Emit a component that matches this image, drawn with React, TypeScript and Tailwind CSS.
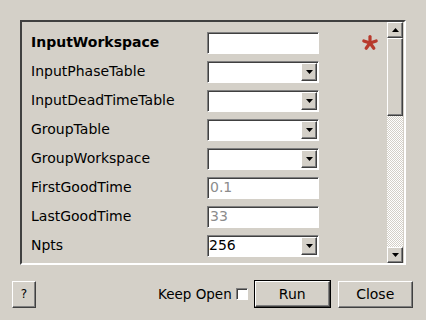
import React from "react";

const raised =
  "border border-t-white border-l-white border-r-[#404040] border-b-[#404040] shadow-[inset_-1px_-1px_#808080]";
const sunken =
  "border border-t-[#808080] border-l-[#808080] border-r-white border-b-white shadow-[inset_1px_1px_#404040]";

const ArrowDown = () => (
  <svg width="7" height="4" viewBox="0 0 7 4">
    <path d="M0 0h7L3.5 4z" fill="#000" />
  </svg>
);

const ArrowUp = () => (
  <svg width="7" height="4" viewBox="0 0 7 4">
    <path d="M0 4h7L3.5 0z" fill="#000" />
  </svg>
);

const TextBox = ({ value, muted }: { value?: string; muted?: boolean }) => (
  <div
    className={`${sunken} bg-white w-[112px] h-[22px] flex items-center pl-[2px] ${
      muted ? "text-[#8c8c8c]" : "text-black"
    }`}
  >
    {value}
  </div>
);

const Combo = ({ value }: { value?: string }) => (
  <div className={`${sunken} bg-white w-[112px] h-[22px] flex items-center pl-[1px] pr-[1px]`}>
    <span className="flex-1">{value}</span>
    <div className={`${raised} bg-[#d4d0c8] w-[16px] h-[18px] flex items-center justify-center`}>
      <ArrowDown />
    </div>
  </div>
);

const rows: { label: string; kind: "text" | "combo"; value?: string; muted?: boolean; bold?: boolean }[] = [
  { label: "InputWorkspace", kind: "text", bold: true },
  { label: "InputPhaseTable", kind: "combo" },
  { label: "InputDeadTimeTable", kind: "combo" },
  { label: "GroupTable", kind: "combo" },
  { label: "GroupWorkspace", kind: "combo" },
  { label: "FirstGoodTime", kind: "text", value: "0.1", muted: true },
  { label: "LastGoodTime", kind: "text", value: "33", muted: true },
  { label: "Npts", kind: "combo", value: "256" },
];

const Asterisk = () => (
  <svg width="18" height="18" viewBox="-9 -9 18 18">
    {[0, 72, 144, 216, 288].map((a) => (
      <line
        key={a}
        x1="0"
        y1="0"
        x2="0"
        y2="-6.5"
        stroke="#b83a2c"
        strokeWidth="3.2"
        strokeLinecap="round"
        transform={`rotate(${a})`}
      />
    ))}
  </svg>
);

export default function App() {
  return (
    <div
      className="w-[426px] h-[320px] bg-[#d4d0c8] text-[14px] text-black overflow-hidden"
      style={{ fontFamily: '"DejaVu Sans", sans-serif' }}
    >
      <div className="pt-[20px] pl-[20px]">
        <div className="w-[386px] h-[245px] border-2 border-t-[#404040] border-l-[#404040] border-r-white border-b-white flex">
          <div className="flex-1 pt-[6px] pl-[9px] relative">
            {rows.map((r) => (
              <div key={r.label} className="h-[29px] flex items-center">
                <div className={`w-[176px] ${r.bold ? "font-bold" : ""}`}>{r.label}</div>
                {r.kind === "text" ? <TextBox value={r.value} muted={r.muted} /> : <Combo value={r.value} />}
              </div>
            ))}
            <div className="absolute left-[339px] top-[12px]">
              <Asterisk />
            </div>
          </div>
          <div className="w-[16px] flex flex-col mr-[1px]">
            <div className={`${raised} bg-[#d4d0c8] h-[16px] flex items-center justify-center`}>
              <ArrowUp />
            </div>
            <div className={`${raised} bg-[#d4d0c8] h-[78px]`} />
            <div className="flex-1 bg-[repeating-conic-gradient(#d4d0c8_0_25%,#ffffff_0_50%)] bg-[length:2px_2px]" />
            <div className={`${raised} bg-[#d4d0c8] h-[16px] flex items-center justify-center`}>
              <ArrowDown />
            </div>
          </div>
        </div>
      </div>
      <div className="flex items-center mt-[15px] pl-[12px]">
        <div className={`${raised} w-[24px] h-[27px] flex items-center justify-center text-[12px]`}>?</div>
        <span className="ml-[122px] text-[13.5px]">Keep Open</span>
        <div className={`${sunken} bg-white w-[12px] h-[12px] ml-[4px]`} />
        <div className="ml-[6px] border border-black">
          <div className={`${raised} w-[75px] h-[26px] flex items-center justify-center`}>Run</div>
        </div>
        <div className={`${raised} w-[75px] h-[27px] ml-[7px] flex items-center justify-center`}>Close</div>
      </div>
    </div>
  );
}
